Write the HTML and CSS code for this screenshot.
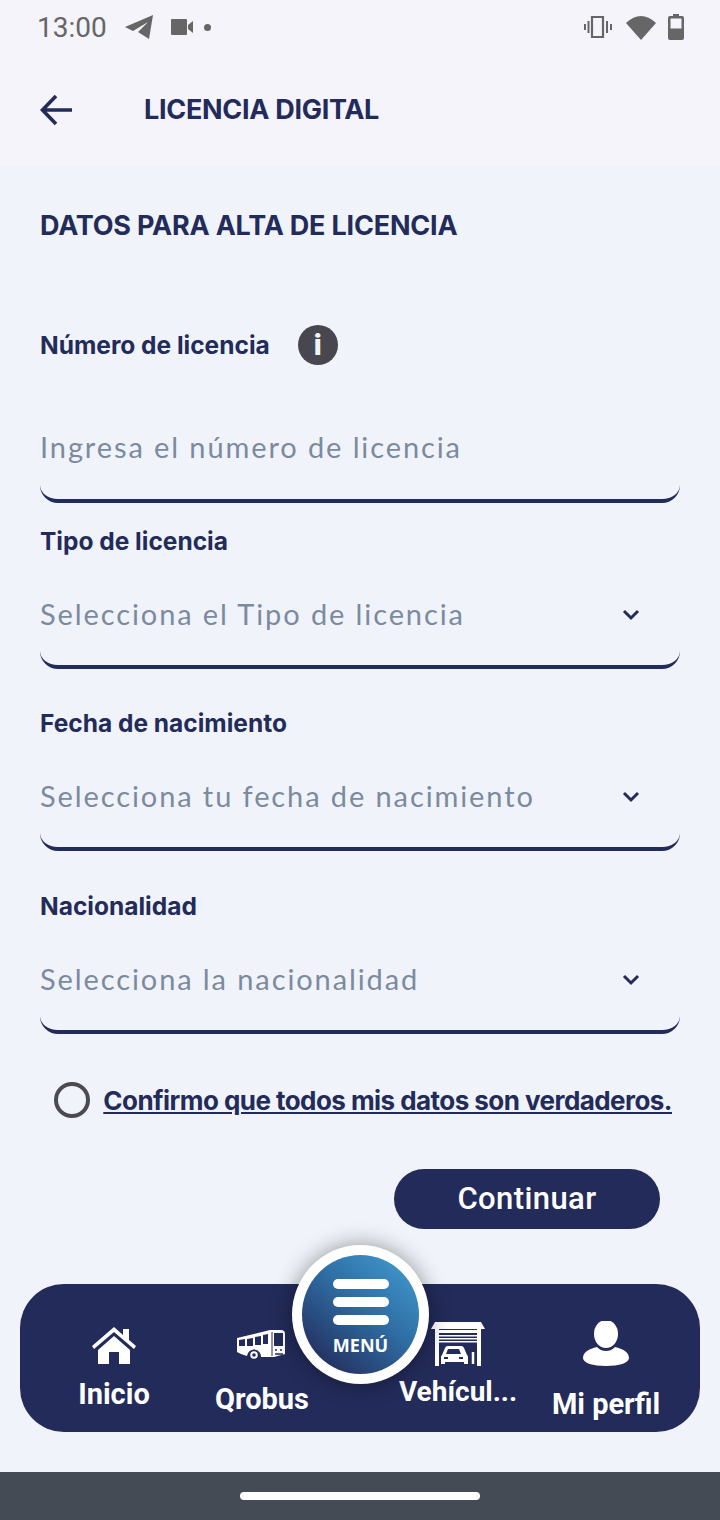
FILE: index.html
```html
<!DOCTYPE html>
<html lang="es">
<head>
<meta charset="UTF-8">
<title>Licencia digital</title>
<link rel="stylesheet" href="styles.css">
</head>
<body>
<div class="top">
	<div class="status">
		<span class="hora">13:00</span>
		<svg class="st-send" viewBox="0 0 28 24"><path d="M0 12 28 0 24 24 13 17 23 7 8 16Z" fill="#666"/></svg>
		<svg class="st-cam" viewBox="0 0 24 16"><path d="M1 0h14a1 1 0 0 1 1 1v14a1 1 0 0 1-1 1H1a1 1 0 0 1-1-1V1a1 1 0 0 1 1-1ZM17 6l5-4v12l-5-4Z" fill="#666"/></svg>
		<span class="st-dot"></span>
		<span class="st-space"></span>
		<svg class="st-vib" viewBox="0 0 28 22"><path d="M8 1h11v20H8Z" fill="none" stroke="#666" stroke-width="2.200"/><path d="M4.500 5v12M1 8v6M23 5v12M27 8v6" stroke="#666" stroke-width="2"/></svg>
		<svg class="st-wifi" viewBox="0 0 30 26"><path d="M0 9Q15-5 30 9L15 26Z" fill="#666"/></svg>
		<svg class="st-bat" viewBox="0 0 16 26"><path d="M5 0h6v2h3a2 2 0 0 1 2 2v20a2 2 0 0 1-2 2H2a2 2 0 0 1-2-2V4a2 2 0 0 1 2-2h3Z" fill="#666"/><path d="M2.500 4.500h11v10h-11Z" fill="#f4f4fa"/></svg>
	</div>
	<div class="header">
		<svg class="back" viewBox="0 0 34 32"><path d="M32 16H3M16 2 2.500 16 16 30" fill="none" stroke="#232b5a" stroke-width="3.600"/></svg>
		<h1>LICENCIA DIGITAL</h1>
	</div>
</div>

<div class="content">
	<h2>DATOS PARA ALTA DE LICENCIA</h2>

	<div class="label-info">
		<span class="label">Número de licencia</span>
		<span class="info">i</span>
	</div>
	<div class="campo campo-1"><span>Ingresa el número de licencia</span></div>

	<div class="label lab-2">Tipo de licencia</div>
	<div class="campo">
		<span>Selecciona el Tipo de licencia</span>
		<svg class="flecha" viewBox="0 0 18 12"><path d="M2 2l7 7 7-7" fill="none" stroke="#232b5a" stroke-width="3"/></svg>
	</div>

	<div class="label lab-3">Fecha de nacimiento</div>
	<div class="campo">
		<span>Selecciona tu fecha de nacimiento</span>
		<svg class="flecha" viewBox="0 0 18 12"><path d="M2 2l7 7 7-7" fill="none" stroke="#232b5a" stroke-width="3"/></svg>
	</div>

	<div class="label lab-4">Nacionalidad</div>
	<div class="campo">
		<span>Selecciona la nacionalidad</span>
		<svg class="flecha" viewBox="0 0 18 12"><path d="M2 2l7 7 7-7" fill="none" stroke="#232b5a" stroke-width="3"/></svg>
	</div>

	<div class="confirmo">
		<span class="radio"></span>
		<a>Confirmo que todos mis datos son verdaderos.</a>
	</div>

	<div class="acciones">
		<div class="btn">Continuar</div>
	</div>
</div>

<div class="nav-wrap">
	<div class="nav">
		<div class="item item-inicio">
			<svg width="46" height="38" viewBox="0 0 46 38"><path d="M1 20 23 1l9 8V3h6v11l7 6-2 3L23 6 3 23Z" fill="#fff"/><path d="M7 24 23 10l16 14v14H28V26H18v12H7Z" fill="#fff"/></svg>
			<span>Inicio</span>
		</div>
		<div class="item item-qrobus">
			<svg width="52" height="30" viewBox="0 0 52 30"><path d="M1 9 34 1h11a4 4 0 0 1 4 4v20l-11 3H25a7 7 0 0 0-14-1l-6-2-4-2Z" fill="#fff"/><path d="M3 11l6-1v7H3ZM11 10l6-1v8h-6ZM19 8l6-1v9h-6ZM27 6l5-1v10h-5ZM38 4h9v13h-9Z" fill="#232b5a"/><path d="M36 3v24" stroke="#232b5a" stroke-width="1"/><circle cx="18" cy="26" r="4.500" fill="#fff" stroke="#232b5a" stroke-width="1.500"/><circle cx="18" cy="26" r="1.800" fill="#232b5a"/><path d="M39 21h2M44 21h2M39 25h8" stroke="#232b5a" stroke-width="1.500"/></svg>
			<span>Qrobus</span>
		</div>
		<div class="spacer"></div>
		<div class="item item-vehiculo">
			<svg width="54" height="44" viewBox="0 0 54 44"><path d="M4 0h46l4 7H0Z" fill="#fff"/><path d="M4 7h4v37H4ZM46 7h4v37h-4ZM8 8h38v3H8ZM8 13h38v1.500H8ZM8 16h38v1.500H8ZM8 19h38v1.500H8Z" fill="#fff"/><path d="M11 33l3-7a3 3 0 0 1 3-2h13a3 3 0 0 1 3 2l3 7a3 3 0 0 1 1 3v6h-4v-2H14v2h-4v-6a3 3 0 0 1 1-3Z" fill="#fff"/><path d="M15 32l2-5h11l2 5ZM13 35h4v2h-4ZM28 35h4v2h-4Z" fill="#232b5a"/><path d="M42 30v12" stroke="#fff" stroke-width="2.500"/></svg>
			<span>Vehícul...</span>
		</div>
		<div class="item item-perfil">
			<svg width="46" height="46" viewBox="0 0 46 46"><ellipse cx="23" cy="13" rx="12" ry="14" fill="#fff"/><path d="M0 37c0-6 6-9 14-11 3 3 6 4 9 4s6-1 9-4c8 2 14 5 14 11 0 5-10 8-23 8S0 42 0 37Z" fill="#fff"/></svg>
			<span>Mi perfil</span>
		</div>
	</div>
	<div class="menu">
		<div class="menu-in">
			<i></i><i></i><i></i>
			<b>MENÚ</b>
		</div>
	</div>
</div>

<div class="home-bar"><span></span></div>
</body>
</html>
```

FILE: styles.css
```css
* { box-sizing: border-box; }
body {
	margin: 0;
	width: 720px;
	height: 1520px;
	background: #f0f4fa;
	font-family: "Inter", "Liberation Sans", sans-serif;
	color: #232b5a;
	display: flex;
	flex-direction: column;
	overflow: hidden;
}
.top {
	background: #f4f4fa;
	height: 166px;
}
.status {
	height: 54px;
	padding: 0 36px 0 37px;
	display: flex;
	align-items: center;
	color: #666;
}
.hora {
	font-family: "Roboto", sans-serif;
	font-size: 28px;
	width: 70px;
}
.st-send { width: 28px; height: 24px; margin-left: 18px; }
.st-cam { width: 24px; height: 16px; margin-left: 18px; }
.st-dot {
	width: 7px;
	height: 7px;
	border-radius: 50%;
	background: #666;
	margin-left: 9px;
}
.st-space { flex: 1; }
.st-vib { width: 28px; height: 22px; }
.st-wifi { width: 30px; height: 26px; margin-left: 14px; }
.st-bat { width: 16px; height: 26px; margin-left: 12px; }
.header {
	height: 112px;
	padding-left: 40px;
	display: flex;
	align-items: center;
}
.back { width: 34px; height: 32px; }
h1 {
	margin: 0 0 2px 70px;
	font-size: 27px;
	font-weight: 700;
	letter-spacing: -0.3px;
}
.content { padding: 0 40px; height: 1118px; }
h2 {
	margin: 43px 0 0;
	font-size: 27px;
	line-height: 34px;
	font-weight: 700;
	letter-spacing: -0.2px;
}
.label {
	font-size: 24.500px;
	line-height: 30px;
	font-weight: 700;
}
.label-info {
	margin-top: 82px;
	display: flex;
	align-items: center;
	height: 40px;
}
.info {
	width: 40px;
	height: 40px;
	margin-left: 28px;
	border-radius: 50%;
	background: #48464f;
	color: #f0f4fa;
	font-family: "Roboto", sans-serif;
	font-weight: 900;
	font-size: 29px;
	line-height: 40px;
	text-align: center;
}
.campo {
	height: 113px;
	padding: 6px 40px 0 0;
	display: flex;
	align-items: center;
	justify-content: space-between;
	border-bottom: 4px solid #232b5a;
	border-radius: 0 0 18px 18px;
	font-size: 29px;
	letter-spacing: 1.900px;
	color: #7c8aa0;
	font-family: "Lato", sans-serif;
}
.campo-1 { margin-top: 32px; height: 106px; padding: 0 0 4px; }
.campo span { display: block; }
.flecha { width: 18px; height: 12px; margin-top: 3px; }
.lab-2 { margin-top: 23px; }
.lab-3 { margin-top: 39px; }
.lab-4 { margin-top: 40px; }
.confirmo {
	margin: 48px 8px 0 14px;
	display: flex;
	align-items: center;
	justify-content: space-between;
}
.radio {
	width: 36px;
	height: 36px;
	border-radius: 50%;
	border: 4px solid #4a4a50;
}
.confirmo a {
	font-size: 26px;
	font-weight: 700;
	letter-spacing: -0.55px;
	text-decoration: underline;
}
.acciones {
	margin-top: 51px;
	padding-right: 20px;
	display: flex;
	justify-content: flex-end;
}
.btn {
	width: 266px;
	height: 60px;
	border-radius: 30px;
	background: #232b5a;
	color: #fff;
	font-family: "Roboto", sans-serif;
	font-size: 31px;
	font-weight: 500;
	letter-spacing: 0.4px;
	line-height: 60px;
	text-align: center;
}
.nav-wrap {
	position: relative;
	margin: 0 20px;
	height: 188px;
}
.nav {
	height: 148px;
	border-radius: 44px;
	background: #232b5a;
	display: flex;
	color: #fff;
	font-family: "Roboto", sans-serif;
	font-weight: 700;
	font-size: 29px;
}
.item {
	display: flex;
	flex-direction: column;
	align-items: center;
	flex-shrink: 0;
}
.item-inicio { width: 188px; padding-top: 42px; }
.item-inicio svg { margin-bottom: 13px; }
.item-qrobus { width: 108px; padding-top: 45px; }
.item-qrobus svg { margin-bottom: 23px; }
.spacer { width: 80px; }
.item-vehiculo { width: 124px; padding-top: 38px; font-size: 28px; }
.item-vehiculo svg { margin-bottom: 9px; }
.item-perfil { flex: 1; padding-top: 37px; padding-right: 8px; }
.item-perfil svg { margin-bottom: 20px; }
.menu {
	position: absolute;
	left: 272px;
	top: -39px;
	width: 137px;
	height: 139px;
	border-radius: 50%;
	background: #fff;
	padding: 10px;
	box-shadow: 0 0 22px rgba(0, 0, 0, 0.4);
}
.menu-in {
	height: 119px;
	border-radius: 50%;
	background: linear-gradient(40deg, #232b5a 8%, #2f6da3 55%, #3c8fc4 85%);
	color: #fff;
	display: flex;
	flex-direction: column;
	align-items: center;
	padding-top: 24px;
}
.menu-in i {
	display: block;
	width: 56px;
	height: 10px;
	border-radius: 5px;
	background: #fff;
	margin-bottom: 8px;
}
.menu-in b {
	font-family: "Open Sans", sans-serif;
	font-size: 18px;
	line-height: 22px;
	margin-top: 1px;
}
.home-bar {
	flex: 1;
	background: #454b54;
	display: flex;
	align-items: center;
	justify-content: center;
}
.home-bar span {
	width: 240px;
	height: 8px;
	border-radius: 4px;
	background: #fff;
}
```
